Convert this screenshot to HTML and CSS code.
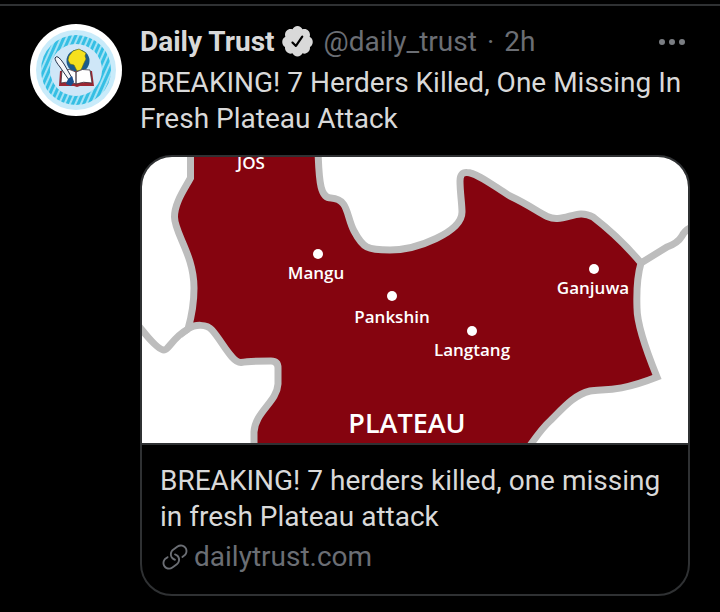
FILE: index.html
```html
<!DOCTYPE html>
<html lang="en">
<head>
    <meta charset="UTF-8">
    <meta name="viewport" content="width=device-width, initial-scale=1.0">
    <title>Daily Trust</title>
    <link rel="stylesheet" href="styles.css">
</head>
<body>
    <article class="tweet">
        <a class="avatar" href="#" aria-label="Daily Trust profile">
            <svg viewBox="0 0 92 92">
                <defs>
                    <pattern id="stripes" width="5" height="5" patternUnits="userSpaceOnUse" patternTransform="rotate(24)">
                        <rect width="5" height="5" fill="#a5e2f5"/>
                        <rect width="3" height="5" fill="#35bfe4"/>
                    </pattern>
                </defs>
                <circle cx="46" cy="46" r="46" fill="#fff"/>
                <circle cx="46" cy="46" r="40" fill="#c9ebfa"/>
                <circle cx="46" cy="46" r="35" fill="url(#stripes)"/>
                <circle cx="46" cy="46" r="26" fill="#cfe7f8"/>
                <!-- globe -->
                <circle cx="48" cy="37" r="11.5" fill="#1d5a8c"/>
                <path d="M39 32l4-5 6-2 7 4-1 3 1 3-2 4-3 7-4 1-3-6-4-1-2-4z" fill="#f6e01e" stroke="#5d6a1c" stroke-width=".6"/>
                <!-- book -->
                <path d="M30 47l-1 15h15l3 1 3-1h14l-2-15z" fill="#9c2733"/>
                <path d="M32 46q8-2 14 2v12q-6-3-15-1zM46 48q6-4 14-2l2 13q-9-2-16 1z" fill="#fff" stroke="#3b3440" stroke-width=".8"/>
                <!-- pen -->
                <path d="M25 34q1-2 3-1 3 2 6 7l8 14-3 2-9-13q-5-6-5-9z" fill="#f4f6fa" stroke="#27344d"/>
                <path d="M38 55l4-3 2 6-3 4-5-2z" fill="#174f8f"/>
            </svg>
        </a>
        <div class="content">
            <header class="tweet-header">
                <a class="name" href="#">Daily Trust</a>
                <svg class="verified" viewBox="1.5 1.5 21 22" role="img" aria-label="Verified">
                    <path d="M22.5 12.5c0-1.58-.875-2.95-2.148-3.6.154-.435.238-.905.238-1.4 0-2.21-1.71-3.998-3.818-3.998-.47 0-.92.084-1.336.25C14.818 2.415 13.51 1.5 12 1.5s-2.816.917-3.437 2.25c-.415-.165-.866-.25-1.336-.25-2.11 0-3.818 1.79-3.818 4 0 .494.083.964.237 1.4-1.272.65-2.147 2.018-2.147 3.6 0 1.495.782 2.798 1.942 3.486-.02.17-.032.34-.032.514 0 2.21 1.708 4 3.818 4 .47 0 .92-.086 1.335-.25.62 1.334 1.926 2.25 3.437 2.25 1.512 0 2.818-.916 3.437-2.25.415.163.865.248 1.336.248 2.11 0 3.818-1.79 3.818-4 0-.174-.012-.344-.033-.513 1.158-.687 1.943-1.99 1.943-3.484zm-6.616-3.334l-4.334 6.5c-.145.217-.382.334-.625.334-.143 0-.288-.04-.416-.126l-.115-.094-2.415-2.415c-.293-.293-.293-.768 0-1.06s.768-.294 1.06 0l1.77 1.767 3.825-5.74c.23-.345.696-.436 1.04-.207.346.23.44.696.21 1.04z"/>
                </svg>
                <div class="meta">
                    <span>@daily_trust</span>
                    <span>·</span>
                    <span>2h</span>
                </div>
                <button class="more-button" type="button" aria-label="More">
                    <svg viewBox="0 0 28 8">
                        <circle cx="4" cy="4" r="3"/>
                        <circle cx="14" cy="4" r="3"/>
                        <circle cx="24" cy="4" r="3"/>
                    </svg>
                </button>
            </header>
            <p class="tweet-text">BREAKING! 7 Herders Killed, One Missing In Fresh Plateau Attack</p>

            <a class="card" href="#">
                <svg class="map" viewBox="142 157 546 286" role="img" aria-label="Map of Plateau">
                    <rect x="142" y="157" width="546" height="286" fill="#fff"/>
                    <g class="border-line">
                        <path d="M136 323L142 330Q158 350 164 350C169 350 172 338 188 329"/>
                        <path d="M641 263L667 247Q678 243 682 236Q685 230 692 227"/>
                        <path class="state" d="M190.5 150V178C184 190 174.500 203 174.500 217C174.500 233 194 255 194 288Q194 308 188 329C195 324 207 324 212 330C222 341 232 363 241 362.5C249 361 259 361 271 361Q278 361 278 368V384C277 402 255 412 254 432V450H527C535 438 542 428 551 420C564 407 574 395 590 391C602 388 614 394 657 377Q637 328 637 308Q636 280 641 263C626 245 606 227 593 217C579 209 569 219 557 218.5C545 219 538 209 510 196C495 187 477 172.5 467 172.5Q460 172 460 181C460 192 462 204 462 212C462 232 417 250 390 250C367 250 363 248 354 231C346 216 349 199 331 198C321 198 319 185 318 150Z"/>
                    </g>
                    <g class="towns">
                        <circle cx="318" cy="254" r="5"/>
                        <circle cx="392" cy="296" r="5"/>
                        <circle cx="472" cy="331" r="5"/>
                        <circle cx="594" cy="269" r="5"/>
                        <text x="251" y="169">JOS</text>
                        <text x="316" y="279">Mangu</text>
                        <text x="392" y="323">Pankshin</text>
                        <text x="472" y="356">Langtang</text>
                        <text x="593" y="294">Ganjuwa</text>
                        <text class="state-name" x="407" y="433">PLATEAU</text>
                    </g>
                </svg>
                <div class="card-body">
                    <div class="card-title">BREAKING! 7 herders killed, one missing in fresh Plateau attack</div>
                    <div class="card-link">
                        <svg viewBox="0 0 24 24">
                            <path d="M11.96 14.945c-.067 0-.136-.01-.203-.027-1.13-.318-2.097-.986-2.795-1.932-.832-1.125-1.176-2.508-.968-3.893s.942-2.605 2.068-3.438l3.53-2.608c2.322-1.716 5.61-1.224 7.33 1.1.83 1.127 1.175 2.51.967 3.895s-.943 2.605-2.07 3.438l-1.48 1.094c-.333.246-.804.175-1.05-.158-.246-.334-.176-.804.158-1.05l1.48-1.095c.803-.592 1.327-1.463 1.476-2.45.148-.988-.098-1.975-.69-2.778-1.225-1.656-3.572-2.01-5.23-.784l-3.53 2.608c-.802.593-1.326 1.464-1.475 2.45-.15.99.097 1.975.69 2.778.498.675 1.187 1.15 1.992 1.377.4.114.633.528.52.928-.092.33-.394.547-.722.547z"/>
                            <path d="M7.27 22.054c-1.61 0-3.197-.735-4.225-2.125-.832-1.127-1.176-2.51-.968-3.894s.943-2.605 2.07-3.438l1.478-1.094c.334-.245.805-.175 1.05.158s.177.804-.157 1.05l-1.48 1.095c-.803.593-1.326 1.464-1.475 2.45-.148.99.097 1.975.69 2.778 1.225 1.657 3.57 2.01 5.23.785l3.528-2.608c1.658-1.225 2.01-3.57.785-5.23-.498-.674-1.187-1.15-1.992-1.376-.4-.113-.633-.527-.52-.927.112-.4.528-.63.926-.522 1.13.318 2.096.986 2.794 1.932 1.717 2.324 1.224 5.612-1.1 7.33l-3.53 2.608c-.933.693-2.023 1.026-3.105 1.026z"/>
                        </svg>
                        <span>dailytrust.com</span>
                    </div>
                </div>
            </a>
        </div>
    </article>
</body>
</html>
```
FILE: styles.css
```css
body {
    margin: 0;
    padding-top: 4px;
    background-color: #000;
    color: #d9d9d9;
    font-family: Roboto, sans-serif;
    font-size: 28px;
    line-height: 36px;
}

a {
    color: inherit;
    text-decoration: none;
}

svg {
    display: block;
}

.tweet {
    display: flex;
    gap: 18px;
    padding: 18px 30px 16px;
    border-top: 2px solid #2f3133;
}

.avatar {
    flex: none;
    width: 92px;
}

.content {
    flex: 1;
    min-width: 0;
}

.tweet-header {
    display: flex;
    align-items: center;
    margin-bottom: 5px;
}

.name {
    font-weight: bold;
}

.verified {
    width: 31px;
    height: 32px;
    margin: 0 11px 0 7px;
    fill: #d9d9d9;
}

.meta {
    display: flex;
    gap: 10px;
    color: #6b6e74;
}

.more-button {
    margin-left: auto;
    padding: 4px;
    border: none;
    background: none;
    cursor: pointer;
}

.more-button svg {
    width: 28px;
    height: 8px;
    fill: #7a7d82;
}

.tweet-text {
    margin: 0 0 18px;
}

.card {
    display: block;
    border: 2px solid #2f3133;
    border-radius: 32px;
    overflow: hidden;
}

/* map preview */
.map {
    width: 100%;
    border-bottom: 2px solid #2f3133;
}

.border-line {
    fill: none;
    stroke: #bdbdbd;
    stroke-width: 7px;
}

.border-line .state {
    fill: #85040f;
}

.towns {
    fill: #fff;
    font-family: "Open Sans", sans-serif;
    font-size: 17px;
    font-weight: 600;
    text-anchor: middle;
}

.state-name {
    font-size: 27px;
}

.card-body {
    padding: 18px 18px 19px;
}

.card-title {
    margin-bottom: 4px;
}

.card-link {
    display: flex;
    align-items: center;
    gap: 4px;
    color: #6b6e74;
}

.card-link svg {
    width: 30px;
    height: 30px;
    fill: #6b6e74;
}
```
